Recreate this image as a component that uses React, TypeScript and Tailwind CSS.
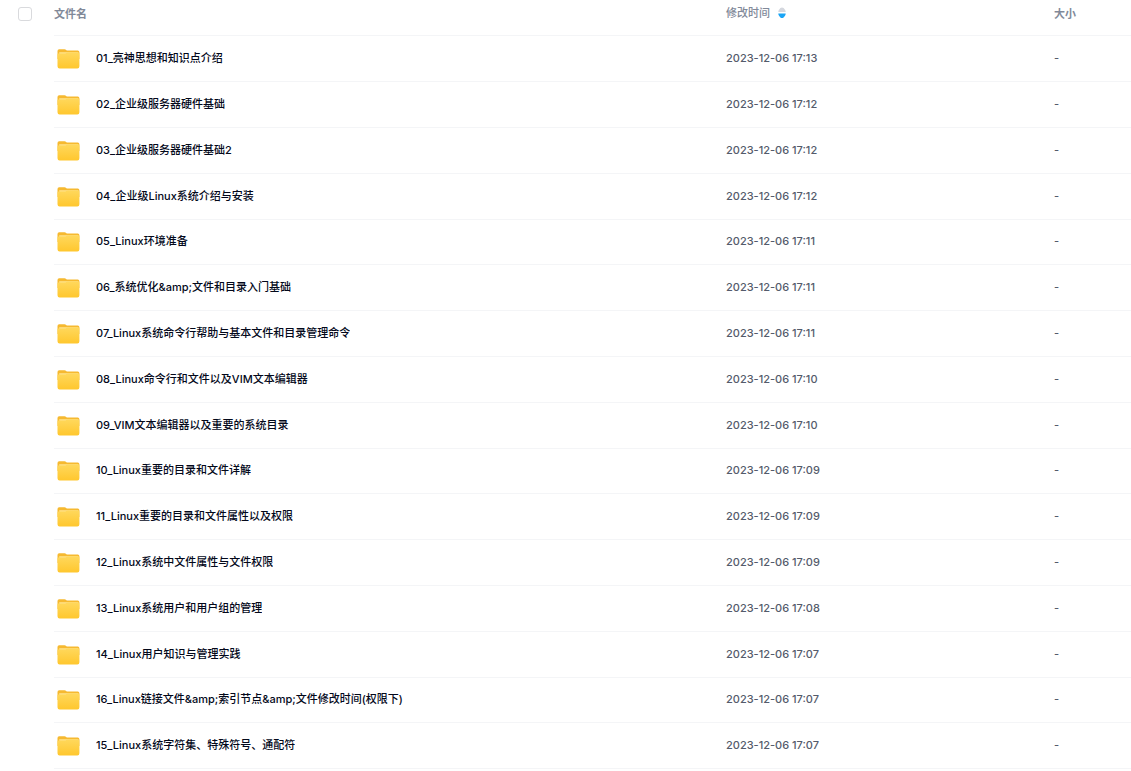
interface FileItem {
  name: string;
  modified: string;
}

const files: FileItem[] = [
  { name: "01_亮神思想和知识点介绍", modified: "2023-12-06 17:13" },
  { name: "02_企业级服务器硬件基础", modified: "2023-12-06 17:12" },
  { name: "03_企业级服务器硬件基础2", modified: "2023-12-06 17:12" },
  { name: "04_企业级Linux系统介绍与安装", modified: "2023-12-06 17:12" },
  { name: "05_Linux环境准备", modified: "2023-12-06 17:11" },
  { name: "06_系统优化&amp;文件和目录入门基础", modified: "2023-12-06 17:11" },
  { name: "07_Linux系统命令行帮助与基本文件和目录管理命令", modified: "2023-12-06 17:11" },
  { name: "08_Linux命令行和文件以及VIM文本编辑器", modified: "2023-12-06 17:10" },
  { name: "09_VIM文本编辑器以及重要的系统目录", modified: "2023-12-06 17:10" },
  { name: "10_Linux重要的目录和文件详解", modified: "2023-12-06 17:09" },
  { name: "11_Linux重要的目录和文件属性以及权限", modified: "2023-12-06 17:09" },
  { name: "12_Linux系统中文件属性与文件权限", modified: "2023-12-06 17:09" },
  { name: "13_Linux系统用户和用户组的管理", modified: "2023-12-06 17:08" },
  { name: "14_Linux用户知识与管理实践", modified: "2023-12-06 17:07" },
  { name: "16_Linux链接文件&amp;索引节点&amp;文件修改时间(权限下)", modified: "2023-12-06 17:07" },
  { name: "15_Linux系统字符集、特殊符号、通配符", modified: "2023-12-06 17:07" },
];

function FolderIcon() {
  return (
    <svg className="w-6 h-6 shrink-0" viewBox="0 0 24 24" aria-hidden="true">
      <defs>
        <linearGradient id="folder-front" x1="0" y1="0" x2="0" y2="1">
          <stop offset="0" stopColor="#ffd85c" />
          <stop offset="1" stopColor="#ffc72e" />
        </linearGradient>
      </defs>
      <path d="M1.500 6V4Q1.500 2.300 3.200 2.300H8.500Q9.500 2.300 10.200 3L10.800 3.500H21.800Q23.400 3.500 23.400 5.200V12H1.500Z" fill="#f6b930" />
      <path d="M3.200 5.200H22.300V9H3.200Z" fill="#ffe28a" />
      <path d="M1.500 7.600Q1.500 6.500 2.600 6.500H8.600Q9.500 6.500 10.200 5.900Q10.800 5.500 11.700 5.500H22.300Q23.400 5.500 23.400 6.600V19.200Q23.400 21.500 21.300 21.500H3.600Q1.500 21.500 1.500 19.200Z" fill="url(#folder-front)" />
    </svg>
  );
}

function SortIcon() {
  return (
    <svg className="w-2 h-3" viewBox="0 0 8 12" aria-hidden="true">
      <path d="M0.300 5Q0.300 3.800 1 2.800L2.400 1.100Q4 -0.300 5.600 1.100L7 2.800Q7.700 3.800 7.700 5Z" fill="#d4d7de" />
      <path d="M0.300 6.500Q0.300 7.700 1 8.700L2.400 10.400Q4 11.800 5.600 10.400L7 8.700Q7.700 7.700 7.700 6.500Z" fill="#1ba5f5" />
    </svg>
  );
}

export default function App() {
  return (
    <main className="min-h-screen bg-white font-['Inter','Noto_Sans_CJK_SC',sans-serif] text-[11px] leading-4 font-medium">
      <table className="w-full table-fixed border-separate border-spacing-0 text-left">
        <colgroup>
          <col className="w-[54px]" />
          <col />
          <col className="w-[328px]" />
          <col className="w-[77px]" />
        </colgroup>

        <thead className="text-[#818999]">
          <tr className="h-9 [&>th]:pb-2 [&>th]:font-bold">
            <th className="pl-[18px]">
              <input
                type="checkbox"
                aria-label="全选"
                className="block w-3.5 h-3.5 appearance-none rounded-[3px] border border-[#d9dadd] bg-white checked:bg-[#06a7ff]"
              />
            </th>
            <th className="border-b border-[#f4f5f7]">文件名</th>
            <th className="border-b border-[#f4f5f7]">
              <button type="button" className="flex items-center gap-2 pb-0.5 font-medium">
                修改时间
                <SortIcon />
              </button>
            </th>
            <th className="border-b border-[#f4f5f7]">大小</th>
          </tr>
        </thead>

        <tbody>
          {files.map((file) => (
            <tr key={file.name} className="h-[46px] nth-[5n]:h-[45px]">
              <td />
              <td className="border-b border-[#f4f5f7]">
                <div className="flex items-center gap-4 pl-0.5">
                  <FolderIcon />
                  <a href="#" className="truncate pb-0.5 text-[#03081a]">
                    {file.name}
                  </a>
                </div>
              </td>
              <td className="border-b border-[#f4f5f7] pb-0.5 text-[#545b6b]">{file.modified}</td>
              <td className="border-b border-[#f4f5f7] pb-0.5 text-[#545b6b]">-</td>
            </tr>
          ))}
        </tbody>
      </table>
    </main>
  );
}
